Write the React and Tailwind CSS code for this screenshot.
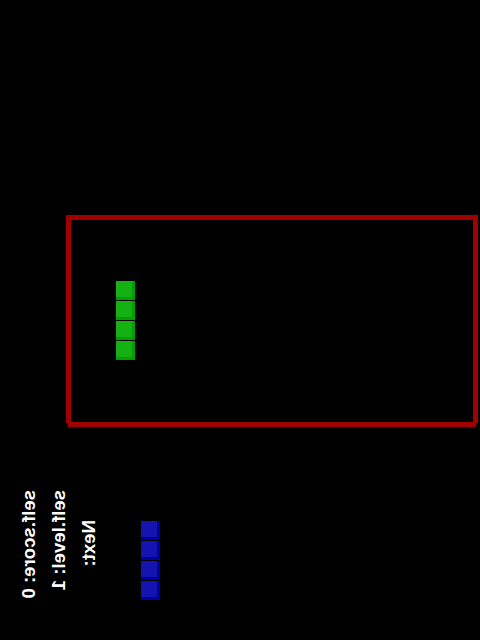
function Block({ outer, inner }) {
    return (
        <div className={`w-[19px] h-[19px] ${outer}`}>
            <div className={`w-4 h-4 ${inner}`}></div>
        </div>
    );
}

function Piece({ outer, inner }) {
    return (
        <div className="flex flex-col gap-px">
            {[0, 1, 2, 3].map((i) => (
                <Block key={i} outer={outer} inner={inner} />
            ))}
        </div>
    );
}

function Label({ children, className }) {
    return (
        <span className={`[writing-mode:vertical-rl] -scale-x-100 whitespace-pre font-['Liberation_Sans',sans-serif] font-bold text-[18.6px] leading-[20px] text-white ${className}`}>
            {children}
        </span>
    );
}

export default function App() {
    return (
        <div className="w-[480px] h-[640px] bg-black overflow-hidden pt-[217px]">
            {/* Board */}
            <div className="ml-[66px] w-[412px] h-[208px] border-x-[5px] border-[#a00000]">
                <div className="-mx-[3px] -my-[2px] h-[212px] border-y-[5px] border-[#a00000] pl-[48px] pt-[61px]">
                    <Piece outer="bg-[#00a000]" inner="bg-[#14b014]" />
                </div>
            </div>

            {/* Score and next piece */}
            <div className="flex items-start mt-[67px] ml-[19px]">
                <Label className="w-5">self.score: 0</Label>
                <Label className="w-5 ml-[10px]">self.level: 1</Label>
                <Label className="w-5 ml-[10px] mt-[30px]">Next:</Label>
                <div className="ml-[42px] mt-[31px]">
                    <Piece outer="bg-[#0000a0]" inner="bg-[#1414b0]" />
                </div>
            </div>
        </div>
    );
}
